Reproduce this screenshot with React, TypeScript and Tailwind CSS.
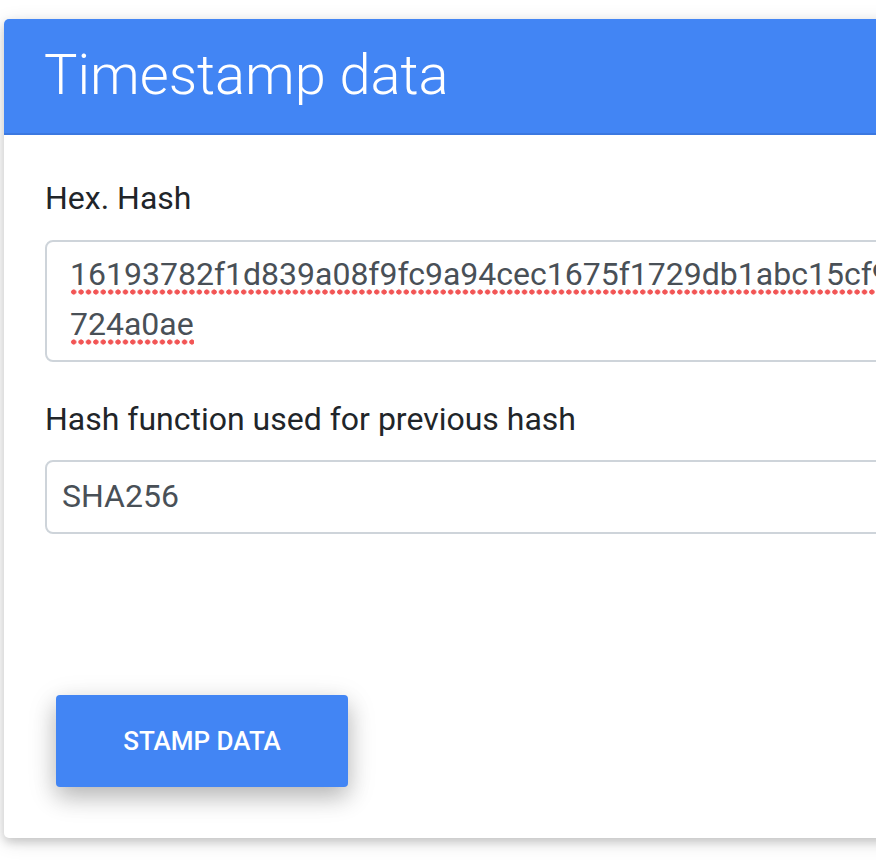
const HASH_LINE_1 = "16193782f1d839a08f9fc9a94cec1675f1729db1abc15cf9e3b0c4429";
const HASH_LINE_2 = "724a0ae";

// spell-check squiggle: a row of small red dots under the word
const squiggle =
  "pb-[2px] bg-[radial-gradient(circle,#f25555_2.3px,transparent_2.9px)] bg-[length:7.4px_6px] bg-repeat-x bg-[position:0_100%]";

const App = () => {
  return (
    <div className="w-screen h-screen overflow-hidden bg-white pl-[4px] pt-[19px] font-['Roboto',sans-serif]">
      <div className="w-[1100px] h-[819px] bg-white rounded-[5px] shadow-[0_4px_10px_0_rgba(0,0,0,0.16),0_4px_20px_0_rgba(0,0,0,0.12)] flex flex-col">
        <div className="h-[116px] bg-[#4285f4] rounded-t-[5px] border-b-2 border-[#3b78e0] flex items-center pl-[40px]">
          <h1 className="text-[56px] font-light text-white leading-none pb-[2px]">
            Timestamp data
          </h1>
        </div>

        <div className="flex flex-col pl-[41px] pt-[39px]">
          <label className="text-[32px] leading-[48px] text-[#212529]">Hex. Hash</label>
          <div className="mt-[18px] h-[122px] border-2 border-[#ced4da] rounded-[8px] pl-[23px] pt-[7px] overflow-hidden whitespace-nowrap text-[32px] leading-[50px] text-[#495057]">
            <div>
              <span className={squiggle}>{HASH_LINE_1}</span>
            </div>
            <div>
              <span className={squiggle}>{HASH_LINE_2}</span>
            </div>
          </div>

          <label className="mt-[33px] text-[32px] leading-[48px] text-[#212529]">
            Hash function used for previous hash
          </label>
          <div className="mt-[17px] h-[74px] border-2 border-[#ced4da] rounded-[8px] pl-[15px] pt-[10px] text-[32px] leading-[48px] text-[#495057]">
            SHA256
          </div>

          <div className="mt-[161px] pl-[11px]">
            <button className="w-[292px] h-[92px] bg-[#4285f4] rounded-[4px] text-white text-[26px] font-medium uppercase shadow-[0_10px_22px_0_rgba(0,0,0,0.18),0_8px_30px_0_rgba(0,0,0,0.15)]">
              Stamp data
            </button>
          </div>
        </div>
      </div>
    </div>
  );
};

export default App;
